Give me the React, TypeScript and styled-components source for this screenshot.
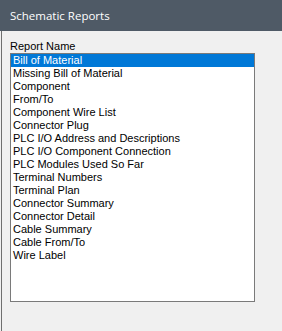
import React from 'react';
import styled, { createGlobalStyle } from 'styled-components';

const GlobalStyle = createGlobalStyle`
  html, body {
    margin: 0;
    padding: 0;
    background: #f0f0f0;
  }
  body {
    width: 282px;
    height: 331px;
    overflow: hidden;
  }
`;

const Window = styled.div`
  width: 282px;
  height: 331px;
  display: flex;
  flex-direction: column;
  background: #f0f0f0;
`;

const TitleBar = styled.div`
  height: 31px;
  flex: none;
  background: #4f5a66;
  color: #ffffff;
  font-family: 'Open Sans', 'Noto Sans', sans-serif;
  font-size: 11.5px;
  line-height: 31px;
  padding-left: 10px;
  box-sizing: border-box;
`;

const Body = styled.div`
  flex: 1;
  margin-left: 1px;
  border-left: 1px solid #6f6f6f;
  padding: 9px 0 0 8px;
  display: flex;
  flex-direction: column;
`;

const Label = styled.div`
  font-family: 'Liberation Sans', Arial, sans-serif;
  font-size: 11px;
  line-height: 13px;
  color: #000000;
  height: 13px;
`;

const ListBox = styled.ul`
  list-style: none;
  margin: 0;
  padding: 0;
  width: 245px;
  height: 249px;
  box-sizing: border-box;
  border: 1px solid #7a7a7a;
  background: #ffffff;
  overflow: hidden;
`;

const Item = styled.li<{ $selected?: boolean }>`
  height: 13px;
  line-height: 13px;
  padding-left: 2px;
  font-family: 'Liberation Sans', Arial, sans-serif;
  font-size: 11px;
  white-space: nowrap;
  background: ${({ $selected }) => ($selected ? '#0078d7' : 'transparent')};
  color: ${({ $selected }) => ($selected ? '#ffffff' : '#000000')};
`;

const reports = [
  'Bill of Material',
  'Missing Bill of Material',
  'Component',
  'From/To',
  'Component Wire List',
  'Connector Plug',
  'PLC I/O Address and Descriptions',
  'PLC I/O Component Connection',
  'PLC Modules Used So Far',
  'Terminal Numbers',
  'Terminal Plan',
  'Connector Summary',
  'Connector Detail',
  'Cable Summary',
  'Cable From/To',
  'Wire Label',
];

const App: React.FC = () => {
  return (
    <>
      <GlobalStyle />
      <Window>
        <TitleBar>Schematic Reports</TitleBar>
        <Body>
          <Label>Report Name</Label>
          <ListBox>
            {reports.map((name, i) => (
              <Item key={name} $selected={i === 0}>
                {name}
              </Item>
            ))}
          </ListBox>
        </Body>
      </Window>
    </>
  );
};

export default App;
